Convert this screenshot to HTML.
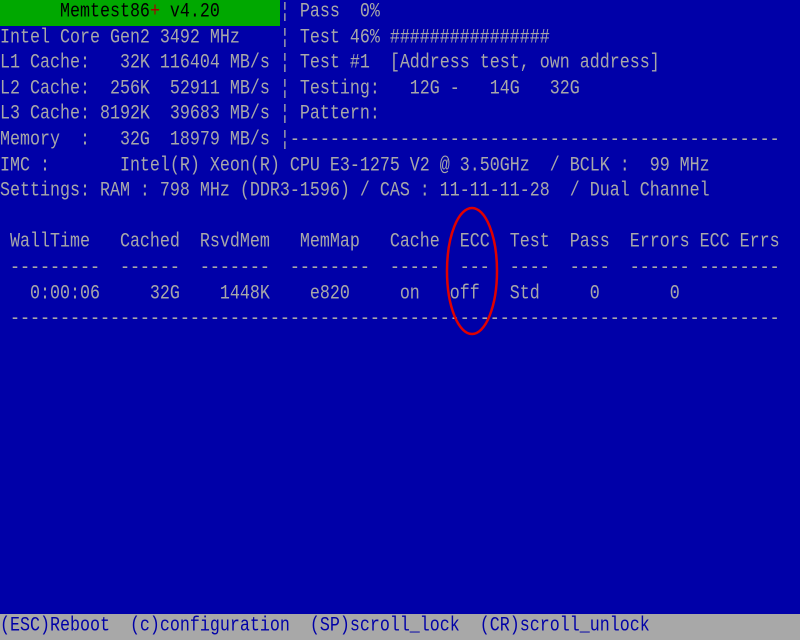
<!DOCTYPE html>
<html><head><meta charset="utf-8"><style>
html,body{margin:0;padding:0;background:#0000a8;width:800px;height:640px;overflow:hidden}
.s{position:relative;width:800px;height:640px;font-family:"Liberation Mono","DejaVu Sans Mono",monospace;font-size:16.67px;color:#a8a8a8}
.r{position:absolute;left:0;height:25.6px;line-height:25.6px;white-space:pre;transform:scaleY(1.2);transform-origin:50% 55%}
.g{position:absolute;left:0;top:0;width:280px;height:25.6px;background:#00a800}
.b{position:absolute;left:0;top:614.4px;width:800px;height:25.6px;background:#a8a8a8}
.k{color:#000}
.red{color:#a80000}
.bl{color:#0000a8}
</style></head><body><div class="s">
<div class="g"></div><div class="b"></div>
<div class="r" style="top:0"><span class="k">      Memtest86<span class="red">+</span> v4.20      </span>¦ Pass  0%</div>
<div class="r" style="top:25.6px">Intel Core Gen2 3492 MHz    ¦ Test 46% ################</div>
<div class="r" style="top:51.2px">L1 Cache:   32K 116404 MB/s ¦ Test #1  [Address test, own address]</div>
<div class="r" style="top:76.8px">L2 Cache:  256K  52911 MB/s ¦ Testing:   12G -   14G   32G</div>
<div class="r" style="top:102.4px">L3 Cache: 8192K  39683 MB/s ¦ Pattern:</div>
<div class="r" style="top:128px">Memory  :   32G  18979 MB/s ¦-------------------------------------------------</div>
<div class="r" style="top:153.6px">IMC :       Intel(R) Xeon(R) CPU E3-1275 V2 @ 3.50GHz  / BCLK :  99 MHz</div>
<div class="r" style="top:179.2px">Settings: RAM : 798 MHz (DDR3-1596) / CAS : 11-11-11-28  / Dual Channel</div>
<div class="r" style="top:230.4px"> WallTime   Cached  RsvdMem   MemMap   Cache  ECC  Test  Pass  Errors ECC Errs</div>
<div class="r" style="top:256px"> ---------  ------  -------  --------  -----  ---  ----  ----  ------ --------</div>
<div class="r" style="top:281.6px">   0:00:06     32G    1448K    e820     on   off   Std     0       0</div>
<div class="r" style="top:307.2px"> -----------------------------------------------------------------------------</div>
<div class="r bl" style="top:614.4px">(ESC)Reboot  (c)configuration  (SP)scroll_lock  (CR)scroll_unlock</div>
<svg style="position:absolute;left:0;top:0" width="800" height="640"><ellipse cx="472" cy="271" rx="25" ry="63" fill="none" stroke="#e00000" stroke-width="2.5"/></svg>
</div></body></html>
